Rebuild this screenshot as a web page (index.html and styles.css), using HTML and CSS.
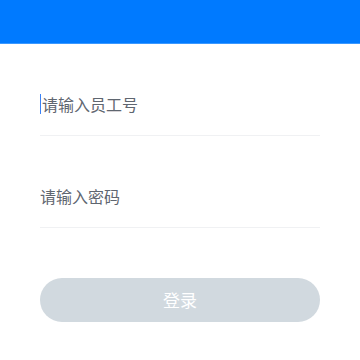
FILE: index.html
```html
<html lang="zh-CN">
    <head>
        <meta charset="UTF-8">
        <title>登录</title>
        <meta name="viewport" content="width=device-width, initial-scale=1">
        <link rel="stylesheet" href="styles.css">
    </head>
    <body>
        <div class="top-bar"></div>
        <div class="login-form">
            <div class="field field-first">
                <span class="caret"></span><span class="placeholder">请输入员工号</span>
            </div>
            <div class="field">
                <span class="placeholder">请输入密码</span>
            </div>
            <div class="login-btn">登录</div>
        </div>
    </body>
</html>
```

FILE: styles.css
```css
body{margin: 0; padding: 0; background: #fff; font-family: "Noto Sans CJK SC", "Noto Sans", sans-serif;}
.top-bar{
    height: 43px;
    background: #007aff;
    border-bottom: 1px solid #3a98ff;
}
.login-form{
    padding: 0 40px;
}
.field{
    display: flex;
    align-items: center;
    padding: 48px 0 19px 0;
    height: 24px;
    border-bottom: 1px solid #f0f1f3;
}
.field-first{
    padding-top: 48px;
}
.caret{
    width: 1px;
    height: 20px;
    background: #3b82f6;
    margin-right: 1px;
}
.placeholder{
    font-size: 16px;
    line-height: 24px;
    color: #5f6670;
}
.login-btn{
    margin-top: 50px;
    height: 44px;
    line-height: 44px;
    border-radius: 22px;
    background: #d1d9df;
    color: #fff;
    text-align: center;
    font-size: 17px;
}
```
